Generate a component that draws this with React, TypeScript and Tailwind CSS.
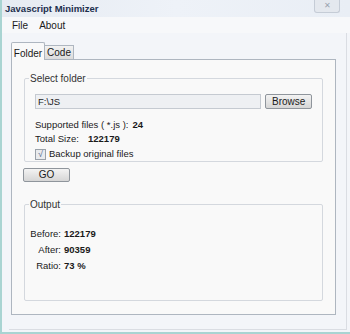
import React from "react";

export default function App() {
  return (
    <div
      className="w-[350px] h-[334px] bg-[#eef1f6] flex flex-col border-l-[2px] border-b-[2px] border-[#a9d4d2] text-[9.5px] text-[#1a1a1a]"
      style={{ fontFamily: '"Liberation Sans", Arial, sans-serif' }}
    >
      {/* title bar */}
      <div className="h-[17px] flex items-start justify-between pl-[3px] pr-[10px] bg-gradient-to-r from-[#e6ebf2] via-[#eef2f8] to-[#e9eef5]">
        <div className="pt-[3px] font-bold text-[#1d2f4d] text-[9.5px] leading-[12px] whitespace-nowrap">Javascript Minimizer</div>
        <div className="w-[26px] h-[13px] border border-t-0 border-[#c5ccd6] rounded-b-[3px] bg-[#e4e8ee] flex items-center justify-center text-[#9aa3ae] text-[8px] leading-none">
          ✕
        </div>
      </div>
      {/* menu */}
      <div className="h-[16px] flex items-center gap-[11px] pl-[10px] bg-[#f7f8fa] text-[10px]">
        <span>File</span>
        <span>About</span>
      </div>
      {/* client */}
      <div className="flex-1 flex flex-col pl-[7px] pr-[3px] pb-[2px] bg-[#f3f5f9]">
        <div className="flex-1 flex flex-col pl-[2px] pr-[10px] pt-[8px] pb-[14px] border-r border-b border-[#dadde3]">
          {/* tabs */}
          <div className="flex items-end h-[18px] relative z-10">
            <div className="w-[34px] h-[18px] pt-[3px] border border-b-0 border-[#aeb6c0] bg-[#f9f9f9] rounded-t-[2px] -mb-px text-center text-[10px]">Folder</div>
            <div className="w-[29px] h-[14px] border border-l-0 border-b-0 border-[#aeb6c0] bg-gradient-to-b from-[#f2f2f2] to-[#dcdcdc] leading-[13px] text-center text-[10px]">Code</div>
          </div>
          {/* tab page */}
          <div className="flex-1 border border-[#aeb6c0] bg-[#f9f9f9] pl-[12px] pr-[12px] pt-[18px]">
            {/* Select folder group */}
            <div className="relative border border-[#d4d8de] rounded-[2px] h-[84px] px-[10px] pt-[15px]">
              <span className="absolute -top-[7px] left-[4px] px-[1px] bg-[#f9f9f9] text-[#333] leading-[13px] text-[10px] whitespace-nowrap">Select folder</span>
              <div className="flex items-center gap-[4px]">
                <div className="w-[228px] h-[15px] border border-[#c5cad1] bg-[#eef0f3] pl-[2px] leading-[13px] text-[#222]">F:\JS</div>
                <div className="w-[47px] h-[15px] border border-[#8f959c] rounded-[2px] bg-gradient-to-b from-[#f3f3f3] to-[#d6d6d6] flex items-center justify-center leading-none text-[10px]">Browse</div>
              </div>
              <div className="mt-[9px] leading-[14px] flex whitespace-nowrap">
                <span>Supported files ( *.js ):</span>
                <span className="font-bold ml-[4px]">24</span>
              </div>
              <div className="leading-[14px] flex whitespace-nowrap">
                <span className="w-[53px] shrink-0">Total Size:</span>
                <span className="font-bold">122179</span>
              </div>
              <div className="flex items-center gap-[3px] mt-[1px] whitespace-nowrap">
                <div className="w-[11px] h-[11px] shrink-0 border border-[#9aa1a9] bg-[#e9ebee] flex items-center justify-center text-[#5c6f8e] text-[9px] leading-none">√</div>
                <span>Backup original files</span>
              </div>
            </div>
            {/* GO */}
            <div className="mt-[6px] -ml-[1px] w-[47px] h-[14px] border border-[#8f959c] rounded-[2px] bg-gradient-to-b from-[#f3f3f3] to-[#d6d6d6] flex items-center justify-center leading-none text-[10px]">GO</div>
            {/* Output group */}
            <div className="relative mt-[22px] border border-[#d4d8de] rounded-[2px] h-[97px] pl-[5px] pt-[22px]">
              <span className="absolute -top-[7px] left-[4px] px-[1px] bg-[#f9f9f9] text-[#333] leading-[13px] text-[10px]">Output</span>
              <div className="grid grid-cols-[31px_auto] gap-y-[3px] leading-[13px] whitespace-nowrap">
                <span className="text-right">Before:</span>
                <span className="font-bold pl-[3px]">122179</span>
                <span className="text-right">After:</span>
                <span className="font-bold pl-[3px]">90359</span>
                <span className="text-right">Ratio:</span>
                <span className="font-bold pl-[3px]">73 %</span>
              </div>
            </div>
          </div>
        </div>
      </div>
    </div>
  );
}
